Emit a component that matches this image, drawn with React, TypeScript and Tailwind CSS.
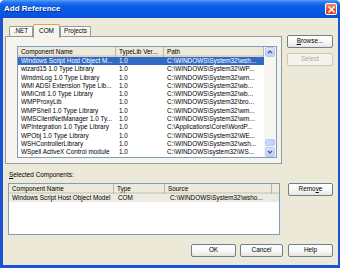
import React from "react";

const topRows: [string, string, string][] = [
  ["Windows Script Host Object M...", "1.0", "C:\\WINDOWS\\System32\\wsh..."],
  ["wizard15 1.0 Type Library", "1.0", "C:\\WINDOWS\\System32\\WP..."],
  ["WmdmLog 1.0 Type Library", "1.0", "C:\\WINDOWS\\System32\\wm..."],
  ["WMI ADSI Extension Type Lib...", "1.0", "C:\\WINDOWS\\System32\\wb..."],
  ["WMICntl 1.0 Type Library", "1.0", "C:\\WINDOWS\\System32\\wb..."],
  ["WMPProxyLib", "1.0", "C:\\WINDOWS\\System32\\bro..."],
  ["WMPShell 1.0 Type Library", "1.0", "C:\\WINDOWS\\System32\\wm..."],
  ["WMSClientNetManager 1.0 Ty...", "1.0", "C:\\WINDOWS\\System32\\wm..."],
  ["WPIntegration 1.0 Type Library", "1.0", "C:\\Applications\\Corel\\WordP..."],
  ["WPObj 1.0 Type Library", "1.0", "C:\\WINDOWS\\System32\\WE..."],
  ["WSHControllerLibrary", "1.0", "C:\\WINDOWS\\System32\\wsh..."],
  ["WSpell ActiveX Control module", "1.0", "C:\\WINDOWS\\system32\\WS..."],
];

function Hdr({ className, children }: { className: string; children?: React.ReactNode }) {
  return (
    <div
      className={`h-full shrink-0 pl-[3px] flex items-center whitespace-nowrap overflow-hidden bg-[#ebeadb] border-r border-[#b9b6a3] shadow-[inset_0_-2px_0_#d9d5c2] ${className}`}
    >
      {children}
    </div>
  );
}

function Btn({
  className,
  children,
  disabled,
}: {
  className: string;
  children: React.ReactNode;
  disabled?: boolean;
}) {
  return (
    <div
      className={`h-[13px] shrink-0 flex items-center justify-center rounded-[2px] border ${
        disabled
          ? "border-[#c9c7ba] bg-[#f5f4ea] text-[#aca899]"
          : "border-[#6d7f92] bg-[linear-gradient(to_bottom,#ffffff_0%,#f7f7f3_60%,#e6e4da_100%)] text-black"
      } ${className}`}
    >
      {children}
    </div>
  );
}

function Chevron({ up }: { up?: boolean }) {
  return (
    <svg width="6" height="4" viewBox="0 0 6 4">
      <path
        d={up ? "M0.8 3.2 L3 1 L5.2 3.2" : "M0.8 0.8 L3 3 L5.2 0.8"}
        fill="none"
        stroke="#4d6185"
        strokeWidth="1.3"
      />
    </svg>
  );
}

function ScrollBtn({ up }: { up?: boolean }) {
  return (
    <div className="h-[10px] w-[10px] mx-auto flex items-center justify-center rounded-[2px] border border-[#b7c9f3] bg-[linear-gradient(to_bottom,#d9e4fd,#bccffb)]">
      <Chevron up={up} />
    </div>
  );
}

export default function App() {
  return (
    <div className="w-[340px] h-[268px] bg-white">
      <div className="w-[340px] h-[268px] flex flex-col rounded-t-[5px] overflow-hidden bg-[#1b52d6] font-['Liberation_Sans',Arial,sans-serif] text-[6.4px] leading-[8.3px] text-black">
        {/* Title bar */}
        <div className="h-[18px] shrink-0 flex items-center pl-[4px] pr-[3px] bg-[linear-gradient(to_bottom,#5a9efb_0%,#2b78f0_12%,#0b5de7_35%,#0556e2_75%,#0a4fd6_100%)]">
          <span className="text-white font-bold text-[8px] leading-[10px] [text-shadow:1px_1px_0_#0a2a8a]">
            Add Reference
          </span>
          <div className="ml-auto w-[12px] h-[12px] rounded-[2px] border border-white bg-[linear-gradient(to_bottom,#f08a64,#e2542d_55%,#d2401c)] flex items-center justify-center">
            <svg width="7" height="7" viewBox="0 0 7 7">
              <path d="M1 1 L6 6 M6 1 L1 6" stroke="white" strokeWidth="1.5" strokeLinecap="square" />
            </svg>
          </div>
        </div>

        {/* Body */}
        <div className="flex-1 ml-[3px] mr-[2px] mb-[3px] bg-[#ece9d8] flex flex-col pt-[6px] pl-[2px] pr-[5px] pb-[8px]">
          {/* Top section */}
          <div className="flex gap-[5px]">
            <div className="w-[277px] flex flex-col">
              {/* Tabs */}
              <div className="h-[13px] flex items-end pl-[4px] relative z-10">
                <div className="w-[24px] h-[10px] flex items-center justify-center border border-b-0 border-[#919b9c] rounded-t-[2px] bg-[linear-gradient(to_bottom,#ffffff,#f1efe6)] mb-[1px]">
                  .NET
                </div>
                <div className="w-[27px] h-[14px] -mb-[1px] flex items-center justify-center border border-b-0 border-[#919b9c] rounded-t-[2px] bg-[#f5f4ee] border-t-[#e6a23c]">
                  COM
                </div>
                <div className="w-[31px] h-[10px] flex items-center justify-center border border-b-0 border-[#919b9c] rounded-t-[2px] bg-[linear-gradient(to_bottom,#ffffff,#f1efe6)] mb-[1px]">
                  Projects
                </div>
              </div>
              {/* Panel */}
              <div className="h-[128px] -mt-[1px] border border-[#919b9c] bg-[#f5f4ee] pl-[11px] pt-[9px]">
                <div className="w-[260px] h-[112px] border border-[#7f9db9] bg-white flex">
                  <div className="w-[246px] flex flex-col overflow-hidden">
                    <div className="h-[10px] flex shrink-0">
                      <Hdr className="w-[98px]">Component Name</Hdr>
                      <Hdr className="w-[48px]">TypeLib Ver...</Hdr>
                      <Hdr className="w-[100px]">Path</Hdr>
                    </div>
                    {topRows.map((r, i) => (
                      <div
                        key={i}
                        className={`h-[8.3px] shrink-0 flex whitespace-nowrap ${
                          i === 0 ? "bg-[#316ac5] text-white" : ""
                        }`}
                      >
                        <div className="w-[98px] pl-[3px] overflow-hidden">{r[0]}</div>
                        <div className="w-[48px] pl-[3px] overflow-hidden">{r[1]}</div>
                        <div className="w-[100px] pl-[3px] overflow-hidden">{r[2]}</div>
                      </div>
                    ))}
                  </div>
                  <div className="w-[12px] flex flex-col bg-[#f7f6f1] py-[0px]">
                    <ScrollBtn up />
                    <div className="flex-1 flex flex-col justify-end pb-[1px]">
                      <div className="h-[7px] w-[10px] mx-auto rounded-[2px] border border-[#b7c9f3] bg-[linear-gradient(to_right,#cbd9fc,#bcd0fb)]" />
                    </div>
                    <ScrollBtn />
                  </div>
                </div>
              </div>
            </div>
            {/* Right buttons */}
            <div className="w-[46px] flex flex-col pt-[11px] gap-[5px]">
              <Btn className="w-[46px]">
                <span>
                  <u>B</u>rowse...
                </span>
              </Btn>
              <Btn className="w-[46px]" disabled>
                <span>Select</span>
              </Btn>
            </div>
          </div>

          {/* Selected components label */}
          <div className="mt-[6px] pl-[4px] h-[9px] leading-[9px]">
            <u>S</u>elected Components:
          </div>

          {/* Lower section */}
          <div className="mt-[4px] flex">
            <div className="ml-[3px] w-[272px] h-[52px] border border-[#7f9db9] bg-white flex flex-col overflow-hidden">
              <div className="h-[10px] flex shrink-0">
                <Hdr className="w-[105px]">Component Name</Hdr>
                <Hdr className="w-[51px]">Type</Hdr>
                <Hdr className="w-[107px]">Source</Hdr>
                <Hdr className="flex-1 shrink border-r-0">{""}</Hdr>
              </div>
              <div className="h-[8.3px] flex whitespace-nowrap bg-[#ecebe3]">
                <div className="w-[105px] pl-[3px] overflow-hidden">Windows Script Host Object Model</div>
                <div className="w-[51px] pl-[4px] overflow-hidden">COM</div>
                <div className="w-[107px] pl-[5px] overflow-hidden">C:\WINDOWS\System32\wsho...</div>
              </div>
            </div>
            <Btn className="ml-[8px] w-[45px]">
              <span>
                Remo<u>v</u>e
              </span>
            </Btn>
          </div>

          {/* Bottom buttons */}
          <div className="mt-[9px] flex justify-end">
            <Btn className="w-[45px]">OK</Btn>
            <Btn className="ml-[4px] w-[43px]">Cancel</Btn>
            <Btn className="ml-[5px] w-[45px]">Help</Btn>
          </div>
        </div>
      </div>
    </div>
  );
}
